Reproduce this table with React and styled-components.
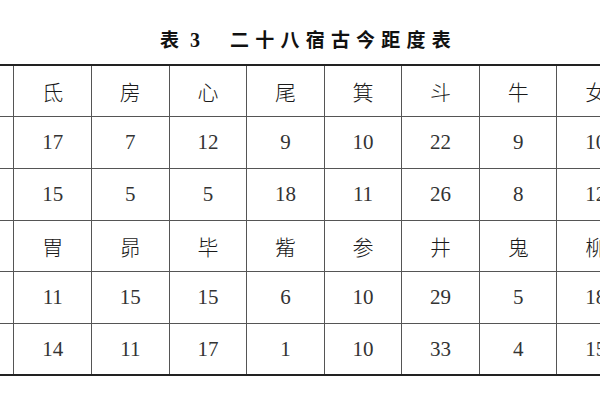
import React from "react";
import styled, { createGlobalStyle } from "styled-components";

const GlobalStyle = createGlobalStyle`
  html, body {
    margin: 0;
    padding: 0;
    background: #fff;
  }
  body {
    width: 600px;
    height: 400px;
    overflow: hidden;
  }
`;

const COL_W = 77.57;

// first column lies mostly off the left edge; only its right border shows
const rows = [
  { kind: "name", cells: ["", "氐", "房", "心", "尾", "箕", "斗", "牛", "女"] },
  { kind: "num", cells: ["", "17", "7", "12", "9", "10", "22", "9", "10"] },
  { kind: "num", cells: ["", "15", "5", "5", "18", "11", "26", "8", "12"] },
  { kind: "name", cells: ["", "胃", "昴", "毕", "觜", "参", "井", "鬼", "柳"] },
  { kind: "num", cells: ["", "11", "15", "15", "6", "10", "29", "5", "18"] },
  { kind: "num", cells: ["", "14", "11", "17", "1", "10", "33", "4", "15"] },
];

function App() {
  return (
    <>
      <GlobalStyle />
      <Page>
        <Caption>
          <CaptionNo>
            表<Digit>3</Digit>
          </CaptionNo>
          <CaptionText>二十八宿古今距度表</CaptionText>
        </Caption>
        <TableClip>
          <Table>
            <colgroup>
              {rows[0].cells.map((_, i) => (
                <col key={i} style={{ width: COL_W }} />
              ))}
            </colgroup>
            <tbody>
              {rows.map((row, r) => (
                <Row key={r} $first={r === 0} $last={r === rows.length - 1}>
                  {row.cells.map((c, i) => (
                    <Cell key={i} $kind={row.kind}>
                      {c}
                    </Cell>
                  ))}
                </Row>
              ))}
            </tbody>
          </Table>
        </TableClip>
      </Page>
    </>
  );
}

export default App;

const Page = styled.div`
  width: 600px;
  height: 400px;
  display: flex;
  flex-direction: column;
`;

const Caption = styled.div`
  height: 64px;
  display: flex;
  align-items: center;
  justify-content: center;
  padding: 12px 0 0 11px;
  box-sizing: border-box;
  font-family: "Noto Sans CJK SC", sans-serif;
  font-weight: 700;
  font-size: 19px;
  color: #111;
`;

const CaptionNo = styled.span`
  display: flex;
  align-items: baseline;
  gap: 11px;
  margin-right: 30px;
`;

const Digit = styled.span`
  font-family: "Liberation Serif", serif;
  font-weight: 700;
  font-size: 20px;
`;

const CaptionText = styled.span`
  letter-spacing: 6.2px;
  margin-right: -6px;
`;

const TableClip = styled.div`
  width: 600px;
  overflow: hidden;
`;

const Table = styled.table`
  margin-left: -63.6px;
  width: ${COL_W * 9}px;
  table-layout: fixed;
  border-collapse: collapse;
`;

const Row = styled.tr`
  height: 51.7px;
  border-top: ${(p) => (p.$first ? "2px solid #222" : "none")};
  border-bottom: ${(p) => (p.$last ? "2px solid #222" : "1px solid #555")};
`;

const Cell = styled.td`
  padding: 0;
  text-align: center;
  vertical-align: middle;
  border-right: 1px solid #555;
  font-family: ${(p) =>
    p.$kind === "name"
      ? `"Noto Sans CJK SC", sans-serif`
      : `"Liberation Serif", serif`};
  font-weight: ${(p) => (p.$kind === "name" ? 300 : 400)};
  font-size: 21px;
  color: ${(p) => (p.$kind === "name" ? "#1a1a1a" : "#333")};
  white-space: nowrap;
`;
